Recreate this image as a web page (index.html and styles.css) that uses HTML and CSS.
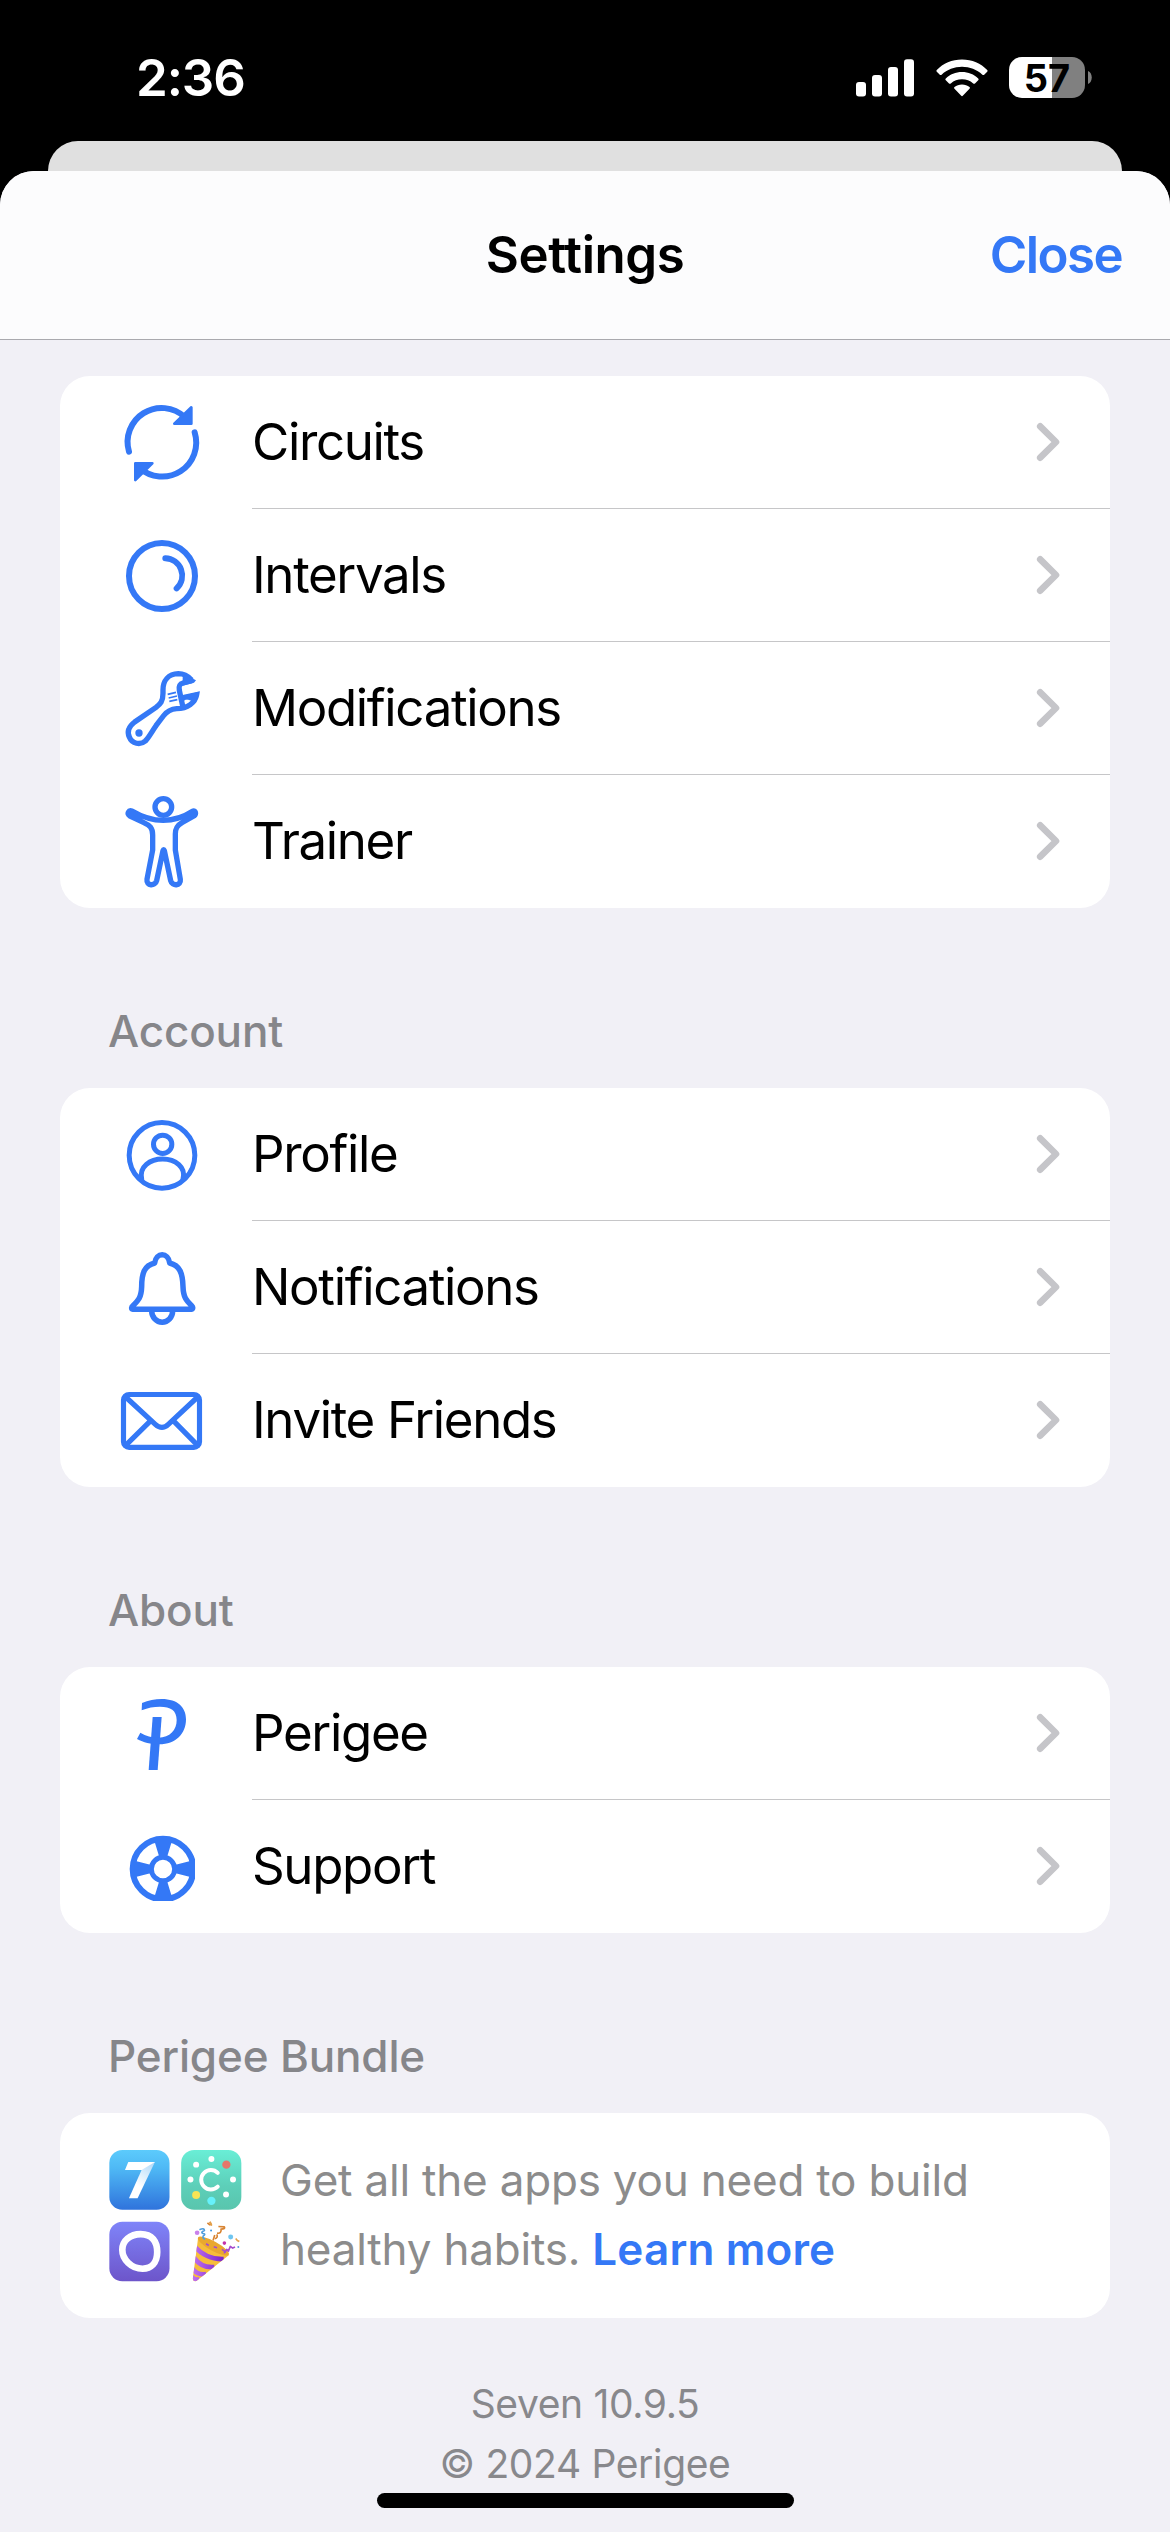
FILE: index.html
```
<!DOCTYPE html>
<html lang="en">
<head>
<meta charset="utf-8">
<title>Settings</title>
<link rel="stylesheet" href="styles.css">
</head>
<body>
<svg class="defs" aria-hidden="true">
  <symbol id="chevron" viewBox="0 0 24 40"><path d="M4.2 4.3 20 20 4.2 35.7" fill="none" stroke="#c5c5c9" stroke-width="6.6" stroke-linecap="round" stroke-linejoin="round"/></symbol>
</svg>
<div class="status-bar">
  <time class="clock">2:36</time>
  <div class="status-icons">
    <svg class="signal" viewBox="0 0 58 38"><rect x="0" y="23" width="10" height="14.5" rx="3"/><rect x="16" y="16" width="10" height="21.500" rx="3"/><rect x="32" y="8" width="10" height="29.500" rx="3"/><rect x="48" y="0.300" width="10" height="37.200" rx="3"/></svg>
    <svg class="wifi" viewBox="0 0 52 38"><path d="M26 .5C36 .5 45 4.500 51.200 11 51.800 11.600 51.700 12.200 51.200 12.700L48.200 15.700C47.600 16.300 47 16.200 46.400 15.700 40.800 10.600 33.800 7.800 26 7.800S11.200 10.600 5.600 15.700C5 16.200 4.400 16.300 3.800 15.700L.8 12.700C.3 12.200.2 11.600.8 11 7 4.500 16 .5 26 .5Z"/><path d="M26 13C32.300 13 38 15.400 42.200 19.400 42.800 20 42.800 20.600 42.200 21.200L39 24.400C38.400 25 37.800 24.900 37.200 24.400 34.100 21.800 30.300 20.300 26 20.300S17.900 21.800 14.800 24.400C14.200 24.900 13.600 25 13 24.400L9.800 21.200C9.200 20.600 9.200 20 9.800 19.400 14 15.400 19.700 13 26 13Z"/><path d="M26 25.500C28.900 25.500 31.500 26.400 33.500 28 34.100 28.500 34.100 29.100 33.500 29.700L27 36.600C26.300 37.300 25.700 37.300 25 36.600L18.500 29.700C17.900 29.100 17.900 28.500 18.500 28 20.500 26.400 23.100 25.500 26 25.500Z"/></svg>
    <div class="battery"><span class="battery-level">57</span><svg class="battery-nub" viewBox="0 0 4 13"><path d="M0 0C5 2 5 11 0 13Z" fill="#808080"/></svg></div>
  </div>
</div>
<div class="sheet-behind"></div>
<main class="sheet">
  <header class="nav">
    <span></span>
    <h1 class="nav-title">Settings</h1>
    <a class="nav-close">Close</a>
  </header>
  <div class="content">
    <section class="card">
      <div class="row">
        <svg class="icon" viewBox="0 0 192 133"><g transform="translate(-10 -6) scale(.33333)" stroke-width="18"><path d="M237 245A102 102 0 0 1 404 141M434 187A102 102 0 0 1 268 293"/><path class="fill join" d="M424 112V161H373ZM256 280H307L256 330Z"/></g></svg>
        <div class="row-body"><span class="label">Circuits</span><svg class="chevron"><use href="#chevron"/></svg></div>
      </div>
      <div class="row">
        <svg class="icon" viewBox="0 0 192 133"><g transform="translate(-10 -139) scale(.33333)" stroke-width="18"><circle cx="336" cy="618" r="99"/><path d="M346 565A52 52 0 0 1 380 655"/></g></svg>
        <div class="row-body"><span class="label">Intervals</span><svg class="chevron"><use href="#chevron"/></svg></div>
      </div>
      <div class="row">
        <svg class="icon" viewBox="0 0 192 133"><g transform="translate(-10 -2) scale(.33333)" stroke-width="16"><path stroke-linecap="butt" stroke-linejoin="miter" d="M425 120C410 104 395 101 385 101 355 102 339 122 339 150V160C339 184 331 192 318 202L254 246C236 260 231 276 238 291 246 312 271 316 286 303 297 292 306 274 318 257L340 228C353 211 364 207 380 206 413 206 436 188 440 164L403 172C396 174 394 178 395 184L399 202M395 184 388 151C386 138 388 132 399 129L425 122"/><path class="fill" d="M405 104 438 121 432 128 398 137V112ZM447 155 442 178 424 194V182L408 177 405 166Z"/><path stroke-width="5" stroke-linecap="butt" d="m353 163 25-6M356 174l25-6M358 184l24-5"/><circle class="fill" cx="267" cy="279" r="11"/></g></svg>
        <div class="row-body"><span class="label">Modifications</span><svg class="chevron"><use href="#chevron"/></svg></div>
      </div>
      <div class="row">
        <svg class="icon" viewBox="0 0 192 133"><g transform="translate(-10 -135) scale(.33333)" stroke-width="16"><circle cx="340" cy="501" r="25"/><path d="M246 513C309 550 370 551 429 513 437 511 439 522 433 527L397 547C380 557 376 567 376 582V630L391 718C394 739 366 739 362 722L343 632Q341 626 339 632L320 722C316 739 288 739 291 718L308 630V585C308 564 300 556 280 547L240 528C229 520 236 510 246 513Z"/></g></svg>
        <div class="row-body"><span class="label">Trainer</span><svg class="chevron"><use href="#chevron"/></svg></div>
      </div>
    </section>

    <h2 class="section-title">Account</h2>
    <section class="card">
      <div class="row">
        <svg class="icon" viewBox="0 0 192 133"><g transform="translate(-10 -88) scale(.33333)" stroke-width="15"><circle cx="336" cy="466" r="98.500"/><circle cx="338" cy="433" r="27.500"/><path d="M275 537C267 500 300 477 338 477S409 502 399 537"/></g></svg>
        <div class="row-body"><span class="label">Profile</span><svg class="chevron"><use href="#chevron"/></svg></div>
      </div>
      <div class="row">
        <svg class="icon" viewBox="0 0 192 133"><g transform="translate(-10 19) scale(.33333)" stroke-width="16.500"><path d="M249 208H424C430 207 429 201 425 197 409 182 400 172 399 140 398 98 389 77 359 69 355 36 318 36 314 69 284 77 275 98 275 140 274 172 265 182 249 197 244 201 243 207 249 208ZM305 212A31.500 34.500 0 0 0 368 212"/></g></svg>
        <div class="row-body"><span class="label">Notifications</span><svg class="chevron"><use href="#chevron"/></svg></div>
      </div>
      <div class="row">
        <svg class="icon" viewBox="0 0 192 133"><g transform="translate(-10 -114) scale(.33333)" stroke-width="15.500"><rect x="220.500" y="463.500" width="228" height="158.500" rx="17"/><path d="M227 471 316 553Q336 571 355 553L443 471M227 616 303 541M443 616 369 541"/></g></svg>
        <div class="row-body"><span class="label">Invite Friends</span><svg class="chevron"><use href="#chevron"/></svg></div>
      </div>
    </section>

    <h2 class="section-title">About</h2>
    <section class="card">
      <div class="row">
        <svg class="icon" viewBox="0 0 192 133"><g class="fill" transform="translate(-10 -97) scale(.33333)"><path d="M308 441H335L323 600H296Z"/><path d="M276 399C295 391 315 387 335 387 384 387 408 413 408 448 408 492 377 523 328 523 301 523 281 517 261 507L271 488C288 498 305 503 325 503 360 503 380 480 380 450 380 421 362 410 330 410 310 410 295 413 275 421Z"/></g></svg>
        <div class="row-body"><span class="label">Perigee</span><svg class="chevron"><use href="#chevron"/></svg></div>
      </div>
      <div class="row">
        <svg class="icon" viewBox="0 0 192 133"><clipPath id="buoy"><path d="M230 790H435V993H230Z"/></clipPath><g transform="translate(-10 -230) scale(.33333)" clip-path="url(#buoy)"><circle cx="339" cy="897" r="91" stroke-width="18"/><circle cx="339" cy="897" r="35" stroke-width="15"/><path class="fill" d="M313 812H366L351 862H328ZM313 982H366L351 932H328ZM254 872V922L304 909V885ZM424 872V922L374 909V885Z"/></g></svg>
        <div class="row-body"><span class="label">Support</span><svg class="chevron"><use href="#chevron"/></svg></div>
      </div>
    </section>

    <h2 class="section-title">Perigee Bundle</h2>
    <section class="card bundle">
      <svg class="apps" viewBox="12 15 400 400">
        <defs>
          <linearGradient id="g7" x2="0" y2="1"><stop stop-color="#5ccbfc"/><stop offset=".3" stop-color="#4fb9f5"/><stop offset="1" stop-color="#2f73dc"/></linearGradient>
          <linearGradient id="gc" x2="0" y2="1"><stop stop-color="#69eed6"/><stop offset=".6" stop-color="#5dcfb9"/><stop offset="1" stop-color="#59c5ad"/></linearGradient>
          <linearGradient id="go" x2="0" y2="1"><stop stop-color="#7f84f9"/><stop offset="1" stop-color="#6d55ca"/></linearGradient>
          <linearGradient id="gs" x1=".8" y1="0" x2=".3" y2="1"><stop stop-color="#b5dcfa"/><stop offset=".7" stop-color="#fff"/></linearGradient>
          <linearGradient id="gp"><stop stop-color="#c575f2"/><stop offset="1" stop-color="#7823cb"/></linearGradient>
          <clipPath id="cone"><path d="M280 279 373 331 276 408Q266 413 264 402Z"/></clipPath>
        </defs>
        <rect x="13" y="15" width="181" height="180" rx="39" fill="url(#g7)"/>
        <path d="M70 51H150L132 75H60Z" fill="#fff"/><path d="M150 51 98 160H72L110 75Z" fill="url(#gs)"/>
        <rect x="229" y="15" width="181" height="180" rx="39" fill="url(#gc)"/>
        <path d="M339 84A29 29 0 1 0 339 125" fill="none" stroke="#fff" stroke-width="12" stroke-linecap="round"/>
        <g fill="#fff"><circle cx="320" cy="42" r="9"/><circle cx="274" cy="59" r="9"/><circle cx="257" cy="104" r="9"/><circle cx="385" cy="104" r="9"/><circle cx="364" cy="149" r="9"/></g>
        <circle cx="365" cy="59" r="12.500" fill="#e4776a"/><circle cx="274" cy="150" r="12" fill="#f7e454"/><circle cx="320" cy="168" r="12.500" fill="#66f1fb"/>
        <rect x="13" y="231" width="181" height="179" rx="39" fill="url(#go)"/>
        <path d="M107 268C142 268 157 291 157 322 157 355 138 372 113 372 79 372 52 344 52 315 52 288 76 268 107 268Z" fill="none" stroke="#fff" stroke-width="20"/>
        <path d="M280 279 373 331 276 408Q266 413 264 402Z" fill="#f6bd3a"/>
        <g clip-path="url(#cone)" fill="none" stroke="url(#gp)" stroke-width="14"><path d="M270 306Q305 345 357 343M267 338Q290 371 329 367M262 371Q278 393 304 388M258 394Q270 408 284 404"/></g>
        <ellipse cx="326" cy="304" rx="53" ry="14" transform="rotate(29 326 304)" fill="#e9a82f"/>
        <path d="m304 297 8 5m15 4 10 3m15 5 12 9" fill="none" stroke="#a44bcf" stroke-width="5"/>
        <g fill="none" stroke-width="5" stroke-linejoin="round"><path d="m316 231 4 11m-12-8 8 7M325 287l5-16M331 282q10-4 5-13M337 265q14 2 12-12 14 0 10-7l-18-1" stroke="#d88432"/><path d="m393 281 5 6 6 3M315 231l6 11" stroke="#e5a14a"/><path d="M284 255q15-7 15 2-13 6-4 9 10 1 0 8-2 7 6 9" stroke="#509edc"/><path d="m358 326 8-12 5 5 6-14 7 5 7-3" stroke="#a64ccd"/></g>
        <circle cx="277" cy="264" r="7" fill="#c981eb"/><circle cx="378" cy="277" r="7.500" fill="#6fc5ef"/><circle cx="359" cy="295" r="5.500" fill="#c432aa"/><circle cx="319" cy="257" r="3" fill="#4196e2"/><circle cx="401" cy="307" r="3" fill="#5799dc"/>
      </svg>
      <p class="bundle-text">Get all the apps you need to build<br>healthy habits. <a class="learn">Learn more</a></p>
    </section>

    <footer class="version">Seven 10.9.5<br>© 2024 Perigee</footer>
  </div>
</main>
<div class="home-indicator"></div>
</body>
</html>
```

FILE: styles.css
```
* { box-sizing: border-box; }

body {
  margin: 0;
  width: 1170px;
  height: 2532px;
  overflow: hidden;
  position: relative;
  display: flex;
  flex-direction: column;
  background: #000;
  color: #000;
  font-family: Inter, "Liberation Sans", sans-serif;
}

h1, h2, p { margin: 0; }

.defs { position: absolute; width: 0; height: 0; }

/* Status bar */
.status-bar {
  height: 141px;
  flex: none;
  display: flex;
  justify-content: space-between;
  align-items: center;
  padding: 14px 78px 0 136px;
  color: #fff;
}
.clock { font-size: 51px; font-weight: 600; letter-spacing: -1.1px; line-height: 60px; }
.status-icons { display: flex; align-items: center; }
.signal { width: 58px; height: 38px; fill: #fff; margin-right: 22px; }
.wifi { width: 52px; height: 38px; fill: #fff; margin-right: 21px; }
.battery { display: flex; align-items: center; gap: 3px; }
.battery-level {
  width: 76px;
  height: 41px;
  border-radius: 13px;
  background: linear-gradient(90deg, #fff 43px, #808080 43px);
  color: #000;
  font-size: 38px;
  font-weight: 700;
  line-height: 42px;
  text-align: center;
}
.battery-nub { width: 4px; height: 13px; }

/* Sheets */
.sheet-behind {
  flex: none;
  height: 30px;
  margin: 0 48px;
  border-radius: 30px 30px 0 0;
  background: #e0e0e0;
}
.sheet {
  flex: 1;
  border-radius: 34px 34px 0 0;
  overflow: hidden;
  background: #f1f0f6;
}
.nav {
  height: 169px;
  display: grid;
  grid-template-columns: 1fr auto 1fr;
  align-items: center;
  padding: 0 48px;
  background: #fcfcfd;
  border-bottom: 1px solid #a9a9ae;
}
.nav-title { font-size: 51px; font-weight: 600; letter-spacing: -0.46px; line-height: 60px; }
.nav-close {
  justify-self: end;
  color: #3478f6;
  font-size: 51px;
  font-weight: 600;
  letter-spacing: -1.6px;
  line-height: 60px;
}

/* Grouped list */
.content { padding: 36px 60px 0; }
.card { border-radius: 30px; background: #fff; overflow: hidden; }
.row { display: flex; height: 133px; }
.icon {
  flex: none;
  width: 192px;
  height: 133px;
  fill: none;
  stroke: #3478f6;
  stroke-linecap: round;
  stroke-linejoin: round;
}
.icon .fill { fill: #3478f6; stroke: none; }
.icon .join { stroke: #3478f6; stroke-width: 8; }
.row-body {
  flex: 1;
  display: flex;
  align-items: center;
  justify-content: space-between;
  padding-right: 50px;
  border-bottom: 1px solid #c6c6c8;
}
.row:last-child .row-body { border-bottom-color: transparent; }
.label { font-size: 51px; letter-spacing: -1.35px; line-height: 60px; }
.chevron { width: 24px; height: 40px; }

.section-title {
  margin: 96px 0 30px 48px;
  color: #86868a;
  font-size: 44px;
  font-weight: 500;
  letter-spacing: -0.15px;
  line-height: 54px;
}

/* Bundle promo */
.bundle { display: flex; height: 205px; padding: 33px 0 0 49px; }
.apps { flex: none; width: 133px; height: 133px; margin: 4px 38px 0 0; }
.bundle-text {
  color: #8c8c8c;
  font-size: 44px;
  letter-spacing: -0.2px;
  line-height: 69px;
  white-space: nowrap;
}
.learn { color: #3478f6; font-weight: 600; letter-spacing: 0.15px; }

.version {
  margin-top: 56px;
  color: #88888c;
  font-size: 39px;
  letter-spacing: -0.35px;
  line-height: 60px;
  text-align: center;
}

.home-indicator {
  position: absolute;
  left: 377px;
  top: 2493px;
  width: 417px;
  height: 15px;
  border-radius: 8px;
  background: #000;
}
```
